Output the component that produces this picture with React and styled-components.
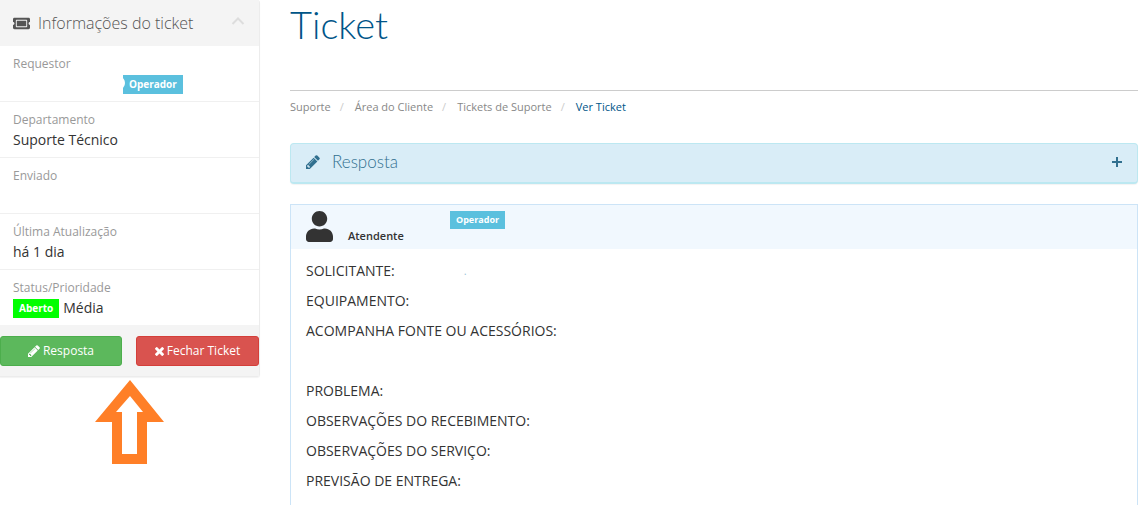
import React from 'react';
import styled, { createGlobalStyle } from 'styled-components';
import { FaTicketAlt, FaUser } from 'react-icons/fa';

const GlobalStyle = createGlobalStyle`
  *, *::before, *::after { box-sizing: border-box; }
  body {
    margin: 0;
    background: #fff;
    color: #333;
    font-family: "Open Sans", "Noto Sans", sans-serif;
    font-size: 14px;
    line-height: 20px;
  }
  h1, h2, h3, p, ol, dl, dd { margin: 0; padding: 0; }
`;

const Page = styled.div`
  display: grid;
  grid-template-columns: 260px minmax(0, 1fr);
  gap: 30px;
  padding-right: 5px;
  min-height: 100vh;
`;

const Sidebar = styled.aside`
  display: flex;
  flex-direction: column;
`;

const Panel = styled.section`
  border: solid #ececec;
  border-width: 0 1px 1px 0;
  border-radius: 0 3px 3px 0;
  box-shadow: 0 1px 1px rgba(0, 0, 0, 0.05);
`;

const PanelHeader = styled.header`
  display: flex;
  align-items: center;
  gap: 8px;
  height: 46px;
  padding: 0 14px 0 13px;
  background: #f4f4f4;
  color: #555;
`;

const PanelTitle = styled.h3`
  flex: 1;
  font-size: 16px;
  font-weight: 300;
  line-height: 20px;
`;

const CollapseButton = styled.button`
  display: flex;
  padding: 0 0 4px;
  border: 0;
  background: none;
  color: #ddd;
  cursor: pointer;
`;

const Info = styled.div`
  height: ${(p) => (p.$last ? 55 : 56)}px;
  padding: 8px 13px;
  border-bottom: ${(p) => (p.$last ? '0' : '1px solid #f0f0f0')};
`;

const InfoLabel = styled.dt`
  color: #999;
  font-size: 12px;
  line-height: 20px;
`;

const InfoValue = styled.dd`
  display: flex;
  align-items: flex-end;
  gap: 4px;
  min-height: 20px;
  padding-left: ${(p) => p.$indent || 0}px;
`;

const Badge = styled.span`
  position: relative;
  display: inline-block;
  height: ${(p) => (p.$small ? 18 : 19)}px;
  padding: 0 6px;
  overflow: hidden;
  background: ${(p) => p.$color || '#5bc0de'};
  color: #fff;
  font-size: ${(p) => (p.$small ? 9 : 10)}px;
  font-weight: 700;
  line-height: ${(p) => (p.$small ? 18 : 19)}px;
`;

const BadgeNotch = styled.i`
  position: absolute;
  top: 2px;
  left: -8px;
  width: 10px;
  height: 12px;
  border-radius: 50%;
  background: #fff;
`;

const PanelFooter = styled.footer`
  display: grid;
  grid-template-columns: 122px 123px;
  justify-content: space-between;
  padding: 11px 0 10px;
  background: #f4f4f4;
`;

const ActionButton = styled.button`
  display: flex;
  align-items: center;
  justify-content: center;
  gap: 3px;
  height: 30px;
  padding: 0;
  border: 1px solid ${(p) => (p.$danger ? '#d43f3a' : '#4cae4c')};
  border-radius: 3px;
  background: ${(p) => (p.$danger ? '#d9534f' : '#5cb85c')};
  color: #fff;
  font: 12px/18px "Open Sans", "Noto Sans", sans-serif;
  cursor: pointer;
`;

const ArrowMark = styled.svg`
  display: block;
  margin: 3px 0 0 95px;
`;

const Main = styled.main`
  display: flex;
  flex-direction: column;
  min-width: 0;
`;

const Title = styled.h1`
  height: 91px;
  padding-top: 4px;
  border-bottom: 1px solid #ccc;
  color: #058;
  font-family: Lato, "Open Sans", sans-serif;
  font-size: 38px;
  font-weight: 300;
  line-height: 40px;
`;

const Breadcrumb = styled.ol`
  display: flex;
  padding: 6px 0;
  list-style: none;
  color: #888;
  font-size: 11px;
  line-height: 20px;

  li + li::before {
    content: "/";
    padding: 0 11px 0 9px;
    color: #ccc;
  }
`;

const Crumb = styled.a`
  color: ${(p) => (p.$current ? '#058' : '#888')};
  text-decoration: none;
`;

const ReplyBar = styled.button`
  display: flex;
  align-items: center;
  gap: 12px;
  width: 100%;
  height: 41px;
  margin-top: 20px;
  padding: 0 14px 2px 15px;
  border: 1px solid #bce8f1;
  border-bottom-width: 2px;
  border-radius: 4px;
  background: #d9edf7;
  box-shadow: 0 1px 1px rgba(0, 0, 0, 0.05);
  color: #31708f;
  text-align: left;
  cursor: pointer;
`;

const ReplyTitle = styled.span`
  flex: 1;
  font-family: Lato, "Open Sans", sans-serif;
  font-size: 17px;
  font-weight: 300;
  line-height: 20px;
`;

const Message = styled.article`
  flex: 1;
  margin-top: 20px;
  border: 1px solid #cce4f7;
  border-bottom: 0;
`;

const MessageHeader = styled.header`
  display: flex;
  align-items: flex-start;
  height: 44px;
  padding: 6px 15px;
  background: #f1f8fe;
`;

const UserIcon = styled(FaUser)`
  flex: none;
  width: 27px;
  height: 31px;
`;

const Author = styled.strong`
  width: 102px;
  margin-left: 15px;
  padding-top: 15px;
  font-size: 11px;
  font-weight: 600;
  line-height: 20px;
`;

const MessageBody = styled.div`
  padding: 12px 15px 0;
`;

const Line = styled.p`
  display: flex;
  min-height: 20px;
  margin-bottom: 10px;

  &:last-child { margin-bottom: 0; }
`;

const Requester = styled.span`
  margin-left: 69px;
  color: #9bc4d8;
  font-size: 11px;
`;

const Pencil = ({ size }) => (
  <svg width={size} height={size} viewBox="128 128 1536 1536" fill="currentColor" aria-hidden="true">
    <path d="M491 1536l91-91-235-235-91 91v107h128v128h107zm523-928q0-22-22-22-10 0-17 7l-542 542q-7 7-7 17 0 22 22 22 10 0 17-7l542-542q7-7 7-17zm-54-192l416 416-832 832h-416v-416zm683 96q0 53-37 90l-166 166-416-416 166-165q36-38 90-38 53 0 91 38l235 234q37 39 37 91z" />
  </svg>
);

const Cross = () => (
  <svg width="9" height="9" viewBox="302 366 1188 1188" fill="currentColor" aria-hidden="true">
    <path d="M1490 1322q0 40-28 68l-136 136q-28 28-68 28t-68-28l-294-294-294 294q-28 28-68 28t-68-28l-136-136q-28-28-28-68t28-68l294-294-294-294q-28-28-28-68t28-68l136-136q28-28 68-28t68 28l294 294 294-294q28-28 68-28t68 28l136 136q28 28 28 68t-28 68l-294 294 294 294q28 28 28 68z" />
  </svg>
);

const fields = [
  'EQUIPAMENTO:',
  'ACOMPANHA FONTE OU ACESSÓRIOS:',
  '',
  'PROBLEMA:',
  'OBSERVAÇÕES DO RECEBIMENTO:',
  'OBSERVAÇÕES DO SERVIÇO:',
  'PREVISÃO DE ENTREGA:',
];

export default function App() {
  return (
    <>
      <GlobalStyle />
      <Page>
        <Sidebar>
          <Panel>
            <PanelHeader>
              <FaTicketAlt size={17} aria-hidden="true" />
              <PanelTitle>Informações do ticket</PanelTitle>
              <CollapseButton type="button" aria-label="Recolher">
                <svg width="14" height="10" viewBox="0 0 14 10" fill="none" stroke="currentColor" strokeWidth="2" aria-hidden="true">
                  <path d="M1.5 8 L7 2.5 L12.5 8" />
                </svg>
              </CollapseButton>
            </PanelHeader>
            <dl>
              <Info>
                <InfoLabel>Requestor</InfoLabel>
                <InfoValue $indent={110}><Badge><BadgeNotch />Operador</Badge></InfoValue>
              </Info>
              <Info>
                <InfoLabel>Departamento</InfoLabel>
                <InfoValue>Suporte Técnico</InfoValue>
              </Info>
              <Info>
                <InfoLabel>Enviado</InfoLabel>
                <InfoValue />
              </Info>
              <Info>
                <InfoLabel>Última Atualização</InfoLabel>
                <InfoValue>há 1 dia</InfoValue>
              </Info>
              <Info $last>
                <InfoLabel>Status/Prioridade</InfoLabel>
                <InfoValue><Badge $color="#0f0">Aberto</Badge>Média</InfoValue>
              </Info>
            </dl>
            <PanelFooter>
              <ActionButton type="button"><Pencil size={12} />Resposta</ActionButton>
              <ActionButton type="button" $danger><Cross />Fechar Ticket</ActionButton>
            </PanelFooter>
          </Panel>
          <ArrowMark width="69" height="84" viewBox="0 0 69 84" aria-hidden="true">
            <path fill="#ff7f27" fillRule="evenodd" d="M35 0 L69 42 H52 V84 H17 V42 H0 Z M35 16 L48 32 H42 V74 H27 V32 H21 Z" />
          </ArrowMark>
        </Sidebar>
        <Main>
          <Title>Ticket</Title>
          <nav aria-label="Navegação">
            <Breadcrumb>
              <li><Crumb href="#suporte">Suporte</Crumb></li>
              <li><Crumb href="#cliente">Área do Cliente</Crumb></li>
              <li><Crumb href="#tickets">Tickets de Suporte</Crumb></li>
              <li><Crumb href="#ticket" $current aria-current="page">Ver Ticket</Crumb></li>
            </Breadcrumb>
          </nav>
          <ReplyBar type="button">
            <Pencil size={14} />
            <ReplyTitle>Resposta</ReplyTitle>
            <svg width="12" height="10" viewBox="0 0 12 10" fill="currentColor" aria-hidden="true">
              <path d="M5 0h2v4h4v2H7v4H5V6H1V4h4z" />
            </svg>
          </ReplyBar>
          <Message>
            <MessageHeader>
              <UserIcon aria-hidden="true" />
              <Author>Atendente</Author>
              <Badge $small>Operador</Badge>
            </MessageHeader>
            <MessageBody>
              <Line>SOLICITANTE:<Requester>.</Requester></Line>
              {fields.map((field, i) => <Line key={i}>{field}</Line>)}
            </MessageBody>
          </Message>
        </Main>
      </Page>
    </>
  );
}
